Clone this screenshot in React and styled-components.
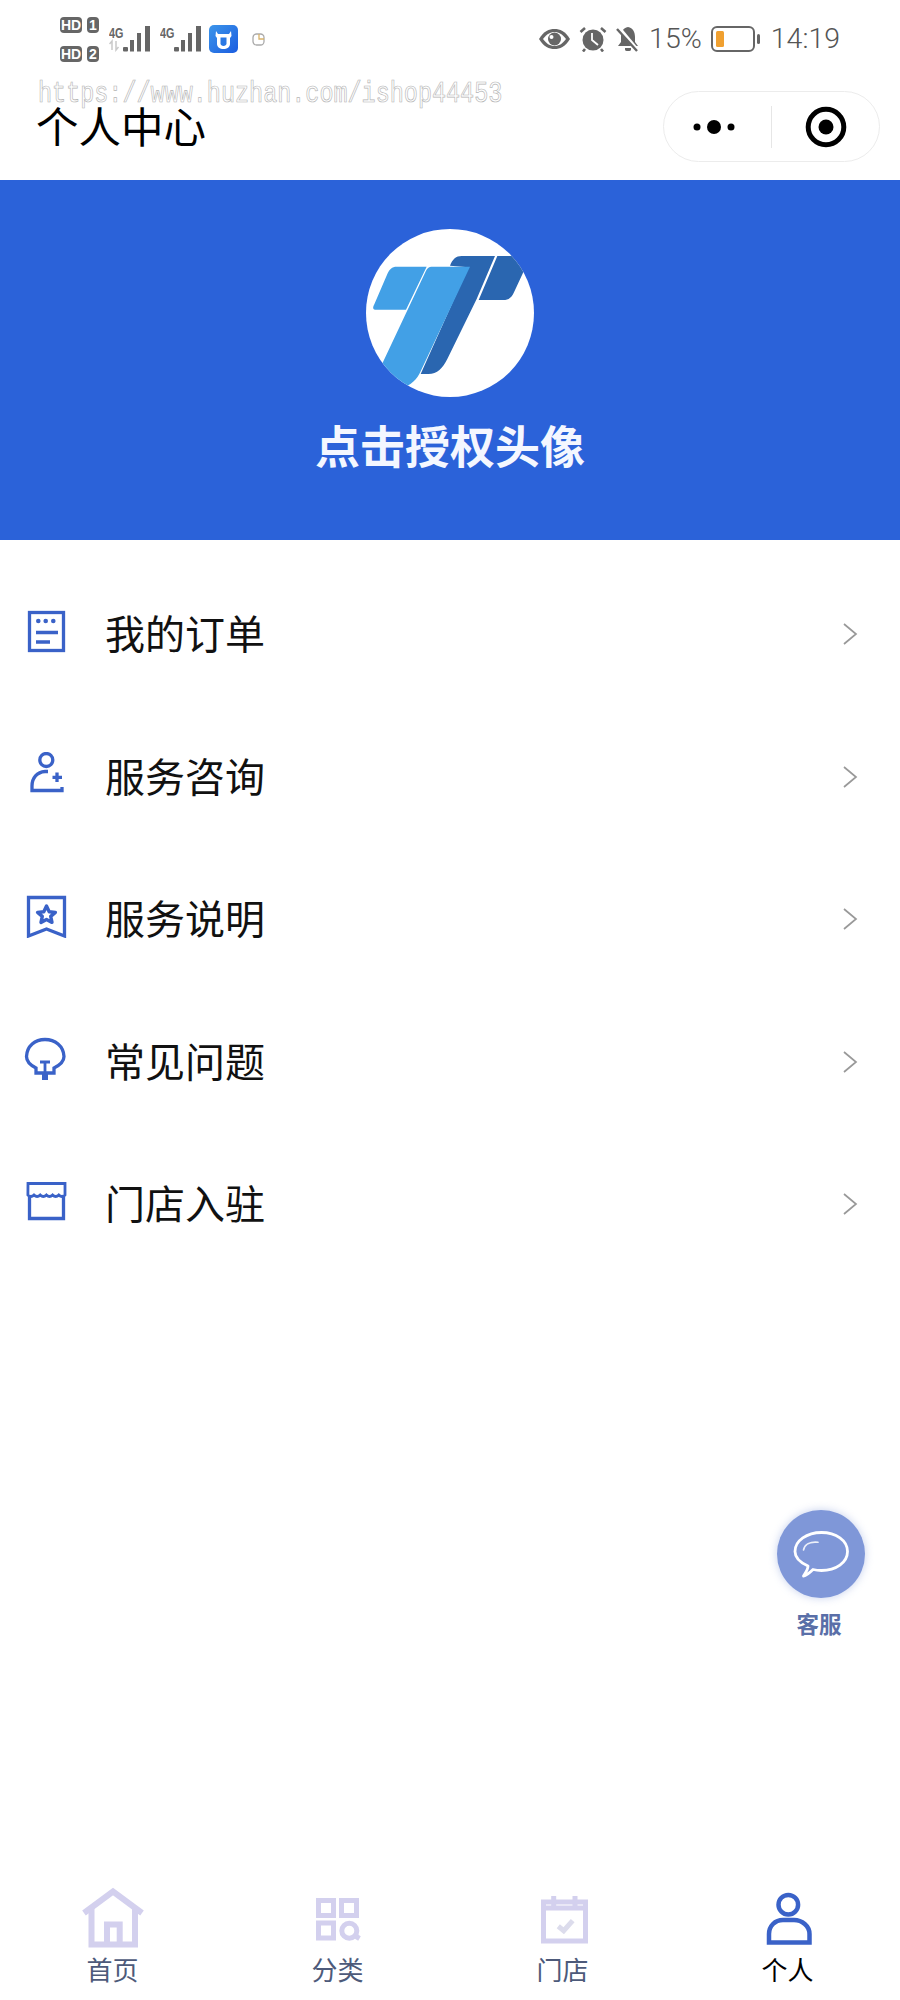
import React from "react";
import styled, { createGlobalStyle } from "styled-components";

const GlobalStyle = createGlobalStyle`
  html, body {
    margin: 0;
    padding: 0;
    background: #fff;
  }
  body {
    font-family: "Noto Sans CJK SC", "Noto Sans", sans-serif;
  }
`;

const Page = styled.div`
  position: relative;
  width: 900px;
  min-height: 2000px;
  display: flex;
  flex-direction: column;
  background: #fff;
  overflow: hidden;
`;

/* status bar */
const StatusBar = styled.div`
  height: 78px;
  padding: 0 60px;
  display: flex;
  align-items: center;
  justify-content: space-between;
  color: #666;
  font-family: Roboto, "Noto Sans", sans-serif;
`;

const StatusGroup = styled.div`
  display: flex;
  align-items: center;
  gap: ${(p) => p.$gap}px;
`;

const SimColumn = styled.div`
  display: flex;
  flex-direction: column;
  gap: 13px;
  margin-right: 10px;
`;

const SimRow = styled.div`
  display: flex;
  gap: 5px;
`;

const SimChip = styled.span`
  width: ${(p) => p.$w}px;
  height: 16px;
  border-radius: 4px;
  background: #666;
  color: #fff;
  font: 700 14px/16px "Liberation Sans", sans-serif;
  text-align: center;
`;

const SignalWrap = styled.div`
  position: relative;
  width: ${(p) => p.$w}px;
  height: 26px;
  margin-right: 9px;
`;

const NetLabel = styled.span`
  position: absolute;
  left: 0;
  top: 0;
  font: 700 15px/13px "Liberation Sans", sans-serif;
  color: #666;
  transform: scaleX(0.72);
  transform-origin: left center;
`;

const StatusText = styled.span`
  font-size: ${(p) => p.$size}px;
  font-weight: 300;
  line-height: 30px;
  color: #555;
  margin-left: ${(p) => p.$ml || 0}px;
`;

const IconSvg = styled.svg`
  display: block;
  flex: none;
`;

/* header */
const Header = styled.div`
  height: 102px;
  padding: 0 20px 5px 36px;
  box-sizing: border-box;
  display: flex;
  align-items: center;
  justify-content: space-between;
`;

const Title = styled.h1`
  margin: 0 0 4px;
  font-size: 42.5px;
  font-weight: 400;
  line-height: 44px;
  color: #000;
`;

const Capsule = styled.div`
  width: 217px;
  height: 71px;
  box-sizing: border-box;
  border: 1.5px solid #ececec;
  border-radius: 36px;
  display: flex;
  align-items: center;
`;

const CapsuleHalf = styled.div`
  flex: 1;
  height: 42px;
  display: flex;
  align-items: center;
  justify-content: center;
  & + & {
    border-left: 1px solid #e6e6e6;
  }
`;

const Watermark = styled.div`
  position: absolute;
  left: 38px;
  top: 83px;
  font: 400 28.6px/24px "Liberation Mono", monospace;
  color: #fff;
  -webkit-text-stroke: 0.7px #b4b4b4;
  white-space: nowrap;
  transform: scaleX(0.82);
  transform-origin: left center;
`;

/* blue banner */
const Banner = styled.div`
  height: 360px;
  padding-top: 49px;
  box-sizing: border-box;
  display: flex;
  flex-direction: column;
  align-items: center;
  background: #2b62d9;
`;

const Avatar = styled.div`
  width: 168px;
  height: 168px;
  border-radius: 50%;
  background: #fff;
`;

const AuthLabel = styled.div`
  margin-top: 22px;
  font-size: 45px;
  font-weight: 700;
  line-height: 52px;
  color: #f4f7ff;
`;

/* menu list */
const MenuList = styled.div`
  padding-top: 23px;
  display: flex;
  flex-direction: column;
`;

const MenuRow = styled.div`
  height: 142.5px;
  padding: 0 42px 0 24px;
  display: flex;
  align-items: center;
`;

const MenuIcon = styled.div`
  width: 44px;
  height: 44px;
  margin: 0 37px 6px 0;
`;

const MenuLabel = styled.div`
  flex: 1;
  margin-bottom: 4px;
  font-size: 40px;
  line-height: 48px;
  color: #111;
`;

/* floating service button */
const ServiceButton = styled.div`
  position: absolute;
  left: 777px;
  top: 1510px;
  width: 88px;
  display: flex;
  flex-direction: column;
  align-items: center;
`;

const ServiceCircle = styled.div`
  width: 88px;
  height: 88px;
  border-radius: 50%;
  background: #7f97d8;
  box-shadow: 0 0 8px rgba(127, 151, 216, 0.45);
`;

const ServiceLabel = styled.div`
  margin-top: 10px;
  padding-right: 4px;
  font-size: 22.5px;
  font-weight: 700;
  line-height: 30px;
  color: #5a6fa8;
`;

/* bottom tabs */
const TabBar = styled.div`
  margin-top: auto;
  padding-bottom: 15px;
  display: grid;
  grid-template-columns: repeat(4, 1fr);
`;

const Tab = styled.div`
  display: flex;
  flex-direction: column;
  align-items: center;
`;

const TabIcon = styled.div`
  width: 64px;
  height: 64px;
`;

const TabLabel = styled.div`
  margin-top: 4px;
  font-size: 26px;
  line-height: 32px;
  color: ${(p) => (p.$active ? "#000" : "#4d5a7a")};
`;

const BLUE = "#3a62c8";
const TAB_GREY = "#d3d0ee";

const Icon44 = ({ children }) => (
  <IconSvg width="44" height="44" viewBox="0 0 44 44" fill="none" stroke={BLUE} strokeWidth="3.3">
    {children}
  </IconSvg>
);

const OrderIcon = () => (
  <Icon44>
    <rect x="5.5" y="3.5" width="34" height="38" />
    <g fill={BLUE} stroke="none">
      <circle cx="14.3" cy="12" r="2.3" />
      <circle cx="21.7" cy="12" r="2.3" />
      <circle cx="29.3" cy="12" r="2.3" />
    </g>
    <path d="M12 23.5H34M12 33H26" />
  </Icon44>
);

const ConsultIcon = () => (
  <Icon44>
    <circle cx="22.3" cy="8" r="6.5" />
    <path d="M38 35V38.5H8V34C8 26 13 20 21 19.5H24" />
    <path d="M33 20.5V30M28.5 25.3H38" />
  </Icon44>
);

const BookmarkIcon = () => (
  <Icon44>
    <path d="M4.5 3.5H40.5V42L22.5 35L4.5 42Z" />
    <polygon
      points="22.5,12 25.2,17.8 31.4,18.4 26.7,22.4 28,28.4 22.5,25.4 17,28.4 18.3,22.4 13.6,18.4 19.8,17.8"
      strokeWidth="3.4"
      strokeLinejoin="round"
    />
  </Icon44>
);

const BulbIcon = () => (
  <Icon44>
    <path d="M12 36V31C6 28 2.5 25 2.5 19.5C3 9 11 2.5 21 2.5C31 2.5 39.5 9 40 19.5C40 25 36 28 30 31V36Z" />
    <path d="M16 25H26M21 25V35" strokeWidth="2.8" />
    <rect x="18" y="36" width="6" height="7" fill={BLUE} stroke="none" />
  </Icon44>
);

const ShopIcon = () => (
  <Icon44>
    <path d="M4 4.5H41V16q-3.1 3 -6.2 0q-3.1 3 -6.2 0q-3.1 3 -6.2 0q-3.1 3 -6.2 0q-3.1 3 -6.2 0q-3.1 3 -6.1 0Z" strokeWidth="2.8" />
    <path d="M5.5 16V39.5H39.5V16" />
  </Icon44>
);

const Chevron = () => (
  <IconSvg width="16" height="24" viewBox="0 0 16 24" fill="none" stroke="#999" strokeWidth="1.7">
    <path d="M2 2L14 12L2 22" />
  </IconSvg>
);

const Tab64 = ({ children, color = TAB_GREY, width = 5 }) => (
  <IconSvg width="64" height="64" viewBox="0 0 64 64" fill="none" stroke={color} strokeWidth={width}>
    {children}
  </IconSvg>
);

const HomeTab = () => (
  <Tab64 width={6}>
    <path d="M3 28L32 6.5L61 28" />
    <path d="M10.5 23V59.5H54V23" />
    <path d="M26 59V39.5H38.7V59" />
  </Tab64>
);

const CategoryTab = () => (
  <Tab64>
    <rect x="12.5" y="15.5" width="15" height="15" />
    <rect x="35.5" y="15.5" width="15" height="15" />
    <rect x="12.5" y="38" width="15" height="15" />
    <circle cx="43.3" cy="45.7" r="7.5" />
    <path d="M48.5 50.5L53.5 53.5" />
  </Tab64>
);

const StoreTab = () => (
  <Tab64>
    <rect x="12.5" y="17" width="42" height="39" />
    <path d="M12.5 23H54.5M22.7 11V23M44 11V23" />
    <path d="M27.3 41.3L32.7 45.7L41.7 35.7" stroke="#dcdcec" />
  </Tab64>
);

const ProfileTab = () => (
  <Tab64 color={BLUE} width={4.5}>
    <circle cx="32.3" cy="19.7" r="9.8" />
    <path d="M13 57.5V49C13 41 19 35 27 35H38C46 35 53.5 41 53.5 49V57.5Z" />
  </Tab64>
);

const Signal = ({ arrows, width }) => (
  <SignalWrap $w={width}>
    <NetLabel>4G</NetLabel>
    <IconSvg width="42" height="26" viewBox="0 0 42 26" fill="#666">
      <rect x="14" y="21" width="5" height="4.5" rx="1" />
      <rect x="21" y="14" width="4" height="11.5" />
      <rect x="28" y="7" width="4" height="18.5" />
      <rect x="36" y="0" width="5" height="25.5" />
      {arrows && <path d="M3 24V15L0.5 18M7 15V24L9.5 21" fill="none" stroke="#c9c9c9" strokeWidth="1.5" />}
    </IconSvg>
  </SignalWrap>
);

const AppBadge = () => (
  <IconSvg width="29" height="28" viewBox="0 0 29 28">
    <defs>
      <linearGradient id="badge" x1="0" y1="0" x2="1" y2="1">
        <stop offset="0" stopColor="#3c95ea" />
        <stop offset="1" stopColor="#1b5de0" />
      </linearGradient>
    </defs>
    <rect width="29" height="28" rx="5" fill="url(#badge)" />
    <path d="M7 6L9 9H20L22 6L22.5 11L21 13V19C21 22 18 24 14.5 24C11 24 8 22 8 19V13L6.5 11Z" fill="#fff" />
    <path d="M11.5 12.5H17.5V18.5C17.5 20 16 21 14.5 21C13 21 11.5 20 11.5 18.5Z" fill="#2a78e4" />
  </IconSvg>
);

const TinyBadge = () => (
  <IconSvg width="13" height="13" viewBox="0 0 13 13" fill="none" style={{ marginLeft: 14 }}>
    <rect x="1" y="1" width="11" height="11" rx="3.5" stroke="#aaa" strokeWidth="1.3" />
    <path d="M7 1V6H12" stroke="#d9b36a" strokeWidth="1.3" />
  </IconSvg>
);

const EyeIcon = () => (
  <IconSvg width="33" height="22" viewBox="0 0 33 22">
    <path d="M1 11C6 3 11 1 16.5 1C22 1 27 3 32 11C27 19 22 21 16.5 21C11 21 6 19 1 11Z" fill="#666" />
    <path d="M5 11C9 6 12 4 16.5 4C21 4 24 6 28 11C24 16 21 18 16.5 18C12 18 9 16 5 11Z" fill="#fff" />
    <circle cx="16.5" cy="11" r="6.5" fill="#666" />
    <circle cx="13.5" cy="9" r="2" fill="#fff" />
  </IconSvg>
);

const AlarmIcon = () => (
  <IconSvg width="28" height="26" viewBox="0 0 28 26" fill="none">
    <circle cx="14" cy="14" r="10.5" fill="#666" />
    <path d="M1.5 6L6 2M26.5 6L22 2M6 23L4 25.5M22 23L24 25.5" stroke="#666" strokeWidth="2.6" />
    <path d="M13 7V14L19 19" stroke="#fff" strokeWidth="1.8" />
  </IconSvg>
);

const MutedBell = () => (
  <IconSvg width="26" height="26" viewBox="0 0 26 26" fill="none">
    <path d="M13 1C8 2 6 6 6 11V16L3 20H23L20 16V11C20 6 18 2 13 1Z" fill="#666" />
    <path d="M10 22H16V23.5C16 24.5 15 25 13 25C11 25 10 24.5 10 23.5Z" fill="#666" />
    <path d="M3 1L23 25" stroke="#fff" strokeWidth="4" />
    <path d="M2 3L22 25" stroke="#666" strokeWidth="2.4" />
  </IconSvg>
);

const Battery = () => (
  <IconSvg width="50" height="26" viewBox="0 0 50 26" fill="none" style={{ marginLeft: 1 }}>
    <rect x="1" y="1" width="42" height="24" rx="5" stroke="#666" strokeWidth="2" />
    <rect x="5" y="5" width="8" height="16" rx="1.5" fill="#f0a030" />
    <rect x="46" y="8" width="3" height="10" rx="1.5" fill="#666" />
  </IconSvg>
);

const MoreDots = () => (
  <IconSvg width="44" height="16" viewBox="0 0 44 16" fill="#000" style={{ marginRight: 8 }}>
    <circle cx="5" cy="8" r="3.5" />
    <circle cx="22" cy="8" r="7" />
    <circle cx="39" cy="8" r="3.5" />
  </IconSvg>
);

const TargetIcon = () => (
  <IconSvg width="42" height="42" viewBox="0 0 42 42" fill="none">
    <circle cx="21" cy="21" r="17.8" stroke="#000" strokeWidth="5" />
    <circle cx="21" cy="21" r="7.5" fill="#000" />
  </IconSvg>
);

const BrandLogo = () => (
  <IconSvg width="168" height="168" viewBox="198 55 504 504">
    <defs>
      <clipPath id="logo-disc">
        <circle cx="450" cy="307" r="252" />
      </clipPath>
    </defs>
    <g clipPath="url(#logo-disc)">
      <path d="M450 165C458 145 468 136 485 136H585L530 265L442 445C428 472 412 490 385 490H362L505 170Z" fill="#2a66b0" />
      <path d="M592 136H640C660 136 680 160 672 180L642 245C636 260 626 268 610 268H536Z" fill="#2a66b0" />
      <path d="M290 168H380L318 297H225C219 297 218 290 222 283L262 190C268 176 276 168 290 168Z" fill="#42a0e6" />
      <path d="M394 168H510L362 482C352 504 335 525 300 535L225 505L378 180C382 172 388 168 394 168Z" fill="#42a0e6" />
    </g>
  </IconSvg>
);

const ChatBubble = () => (
  <IconSvg width="88" height="88" viewBox="0 0 88 88" fill="none" stroke="#fff" strokeWidth="2.8" strokeLinejoin="round">
    <path d="M31 56C22 52 18 47 18 41.5C18 30.5 30 22.5 44.5 22.5C59 22.5 70.5 30.5 70.5 41.5C70.5 52.5 59 60.5 44.5 60.5C41 60.5 38 60 36 59.5C33 62.5 30 65.5 26.5 66C29 62 31 59.5 31 56Z" />
    <path d="M26.5 40C27.5 34.5 33 31.5 41 32.3" strokeWidth="1.6" strokeLinecap="round" opacity="0.85" />
  </IconSvg>
);

const menuItems = [
  { label: "我的订单", icon: <OrderIcon /> },
  { label: "服务咨询", icon: <ConsultIcon /> },
  { label: "服务说明", icon: <BookmarkIcon /> },
  { label: "常见问题", icon: <BulbIcon /> },
  { label: "门店入驻", icon: <ShopIcon /> },
];

const tabs = [
  { label: "首页", icon: <HomeTab /> },
  { label: "分类", icon: <CategoryTab /> },
  { label: "门店", icon: <StoreTab /> },
  { label: "个人", icon: <ProfileTab />, active: true },
];

const App = () => {
  return (
    <Page>
      <GlobalStyle />
      <StatusBar>
        <StatusGroup $gap={0}>
          <SimColumn>
            <SimRow>
              <SimChip $w={22}>HD</SimChip>
              <SimChip $w={12}>1</SimChip>
            </SimRow>
            <SimRow>
              <SimChip $w={22}>HD</SimChip>
              <SimChip $w={12}>2</SimChip>
            </SimRow>
          </SimColumn>
          <Signal arrows width={42} />
          <Signal width={40} />
          <AppBadge />
          <TinyBadge />
        </StatusGroup>
        <StatusGroup $gap={8}>
          <EyeIcon />
          <AlarmIcon />
          <MutedBell />
          <StatusText $size={28.5}>15%</StatusText>
          <Battery />
          <StatusText $size={28.5} $ml={2}>14:19</StatusText>
        </StatusGroup>
      </StatusBar>

      <Header>
        <Title>个人中心</Title>
        <Capsule>
          <CapsuleHalf>
            <MoreDots />
          </CapsuleHalf>
          <CapsuleHalf>
            <TargetIcon />
          </CapsuleHalf>
        </Capsule>
      </Header>
      <Watermark>https://www.huzhan.com/ishop44453</Watermark>

      <Banner>
        <Avatar>
          <BrandLogo />
        </Avatar>
        <AuthLabel>点击授权头像</AuthLabel>
      </Banner>

      <MenuList>
        {menuItems.map((item) => (
          <MenuRow key={item.label}>
            <MenuIcon>{item.icon}</MenuIcon>
            <MenuLabel>{item.label}</MenuLabel>
            <Chevron />
          </MenuRow>
        ))}
      </MenuList>

      <ServiceButton>
        <ServiceCircle>
          <ChatBubble />
        </ServiceCircle>
        <ServiceLabel>客服</ServiceLabel>
      </ServiceButton>

      <TabBar>
        {tabs.map((tab) => (
          <Tab key={tab.label}>
            <TabIcon>{tab.icon}</TabIcon>
            <TabLabel $active={tab.active}>{tab.label}</TabLabel>
          </Tab>
        ))}
      </TabBar>
    </Page>
  );
};

export default App;
